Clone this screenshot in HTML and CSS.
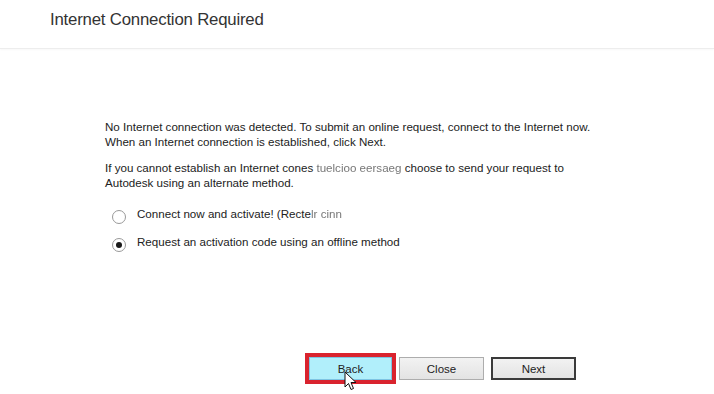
FILE: index.html
```html
<!DOCTYPE html>
<html lang="en">
<head>
  <meta charset="utf-8" />
  <title>Internet Connection Required</title>
  <link rel="stylesheet" href="styles.css">
</head>
<body>

  <header class="dialog-head">
    <h1>Internet Connection Required</h1>
  </header>

  <main class="dialog-body">
    <p>No Internet connection was detected. To submit an online request, connect to the Internet now.<br>
      When an Internet connection is established, click Next.</p>
    <p>If you cannot establish an Internet cones <span class="blur">tuelcioo eersaeg</span> choose to send your request to<br>
      Autodesk using an alternate method.</p>

    <div class="options">
      <label class="option">
        <input type="radio" name="method">
        <span>Connect now and activate! (Recte<span class="blur">lr cinn</span></span>
      </label>
      <label class="option">
        <input type="radio" name="method" checked>
        <span>Request an activation code using an offline method</span>
      </label>
    </div>
  </main>

  <footer class="actions">
    <div class="btn-wrap">
      <button class="btn focus">Back</button>
      <svg class="cursor" width="14" height="21" viewBox="0 0 14 21">
        <path d="M1 1 L1 16 L4.5 12.5 L7 18.5 L9.5 17.5 L7 11.5 L12 11.5 Z" fill="#fff" stroke="#111" stroke-width="1" stroke-linejoin="round"/>
      </svg>
    </div>
    <button class="btn">Close</button>
    <button class="btn default">Next</button>
  </footer>

</body>
</html>
```

FILE: styles.css
```css
html, body {
  height: 100%;
}

body {
  margin: 0;
  background: #fff;
  color: #222;
  font-family: "Liberation Sans", Arial, sans-serif;
  display: flex;
  flex-direction: column;
}

.dialog-head {
  height: 48px;
  border-bottom: 1px solid #ededed;
  box-shadow: 0 1px 2px rgba(0,0,0,0.03);
}

.dialog-head h1 {
  margin: 0;
  padding: 10px 0 0 50px;
  font-size: 16.8px;
  font-weight: normal;
  letter-spacing: -0.2px;
  color: #333;
}

.dialog-body {
  flex: 1;
  padding: 71px 0 0 105px;
  font-size: 11.6px;
  line-height: 14.5px;
}

.dialog-body p {
  margin: 0 0 12px;
}

.blur {
  color: #777;
  filter: blur(0.3px);
}

.options {
  display: flex;
  flex-direction: column;
  gap: 9px;
  padding: 3px 0 0 7px;
}

.option {
  display: flex;
  align-items: center;
  gap: 11px;
}

.option input {
  appearance: none;
  width: 14px;
  height: 14px;
  margin: 5px 0 0;
  border: 1px solid #999;
  border-radius: 50%;
  background: #fff;
  display: grid;
  place-items: center;
}

.option input:checked::after {
  content: "";
  width: 6px;
  height: 6px;
  border-radius: 50%;
  background: #1a1a1a;
}

.actions {
  display: flex;
  justify-content: flex-end;
  gap: 7px;
  padding: 0 138px 14px 0;
}

.btn-wrap {
  position: relative;
}

.btn {
  width: 85px;
  height: 23px;
  margin: 0;
  padding: 0;
  font-family: "Liberation Sans", Arial, sans-serif;
  font-size: 11.5px;
  color: #222;
  border: 1px solid #adadad;
  background: linear-gradient(#f2f2f2, #e3e3e3);
}

.btn.focus {
  width: 83px;
  background: #b1effb;
  border-color: #7ec4e3;
  outline: 4px solid #d9232e;
}

.btn.default {
  border: 2px solid #3a3a3a;
}

.cursor {
  position: absolute;
  left: 35px;
  top: 14px;
}
```
